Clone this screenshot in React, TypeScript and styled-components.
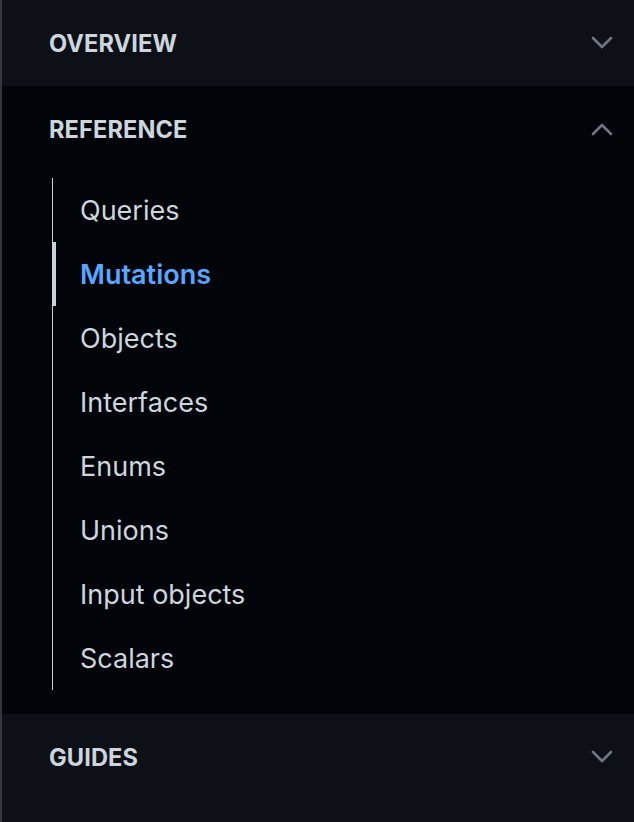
import React from "react";
import styled, { createGlobalStyle } from "styled-components";

const GlobalStyle = createGlobalStyle`
  html, body {
    margin: 0;
    padding: 0;
    background: #0d1117;
  }
  * { box-sizing: border-box; }
`;

const Sidebar = styled.nav`
  width: 634px;
  min-height: 822px;
  background: #0d1117;
  border-left: 2px solid #30363d;
  font-family: Inter, "Noto Sans", "Liberation Sans", sans-serif;
  display: flex;
  flex-direction: column;
`;

const Section = styled.section<{ $open?: boolean }>`
  background: ${(p) => (p.$open ? "#010409" : "#0d1117")};
  padding-bottom: ${(p) => (p.$open ? "24px" : "0")};
`;

const Header = styled.button`
  all: unset;
  width: 100%;
  height: 86px;
  padding: 0 20px 0 47px;
  display: flex;
  align-items: center;
  justify-content: space-between;
  cursor: pointer;
  box-sizing: border-box;
`;

const HeaderTitle = styled.span`
  font-size: 23.6px;
  font-weight: 700;
  letter-spacing: 0.1px;
  color: #cdd5dd;
  text-transform: uppercase;
`;

const List = styled.ul`
  list-style: none;
  margin: 6px 0 0 50px;
  padding: 0;
  border-left: 1px solid #c9d1d9;
`;

const Item = styled.li<{ $active?: boolean }>`
  height: 64px;
  display: flex;
  align-items: center;
  margin-left: -1px;
  border-left: ${(p) => (p.$active ? "4px solid #c9d1d9" : "1px solid transparent")};
  padding-left: ${(p) => (p.$active ? "24px" : "27px")};
  font-size: 27px;
  font-weight: ${(p) => (p.$active ? 600 : 400)};
  color: ${(p) => (p.$active ? "#58a6ff" : "#cdd5dd")};
`;

const Chevron = ({ up }: { up?: boolean }) => (
  <svg width="24" height="14" viewBox="0 0 24 14" fill="none">
    <polyline
      points={up ? "3,12 12,3 21,12" : "3,2 12,11 21,2"}
      stroke="#6e7681"
      strokeWidth="2.6"
      strokeLinecap="round"
      strokeLinejoin="round"
    />
  </svg>
);

const items = [
  "Queries",
  "Mutations",
  "Objects",
  "Interfaces",
  "Enums",
  "Unions",
  "Input objects",
  "Scalars",
];

export default function App() {
  return (
    <>
      <GlobalStyle />
      <Sidebar>
        <Section>
          <Header>
            <HeaderTitle>Overview</HeaderTitle>
            <Chevron />
          </Header>
        </Section>
        <Section $open>
          <Header>
            <HeaderTitle>Reference</HeaderTitle>
            <Chevron up />
          </Header>
          <List>
            {items.map((it) => (
              <Item key={it} $active={it === "Mutations"}>
                {it}
              </Item>
            ))}
          </List>
        </Section>
        <Section>
          <Header>
            <HeaderTitle>Guides</HeaderTitle>
            <Chevron />
          </Header>
        </Section>
      </Sidebar>
    </>
  );
}
